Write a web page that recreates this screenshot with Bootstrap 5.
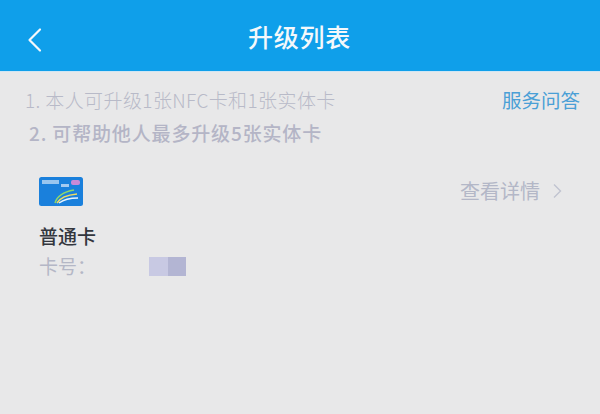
<!DOCTYPE html>
<html lang="zh">
<head>
<meta charset="utf-8">
<title>升级列表</title>
<link href="https://cdn.jsdelivr.net/npm/bootstrap@5.3.0/dist/css/bootstrap.min.css" rel="stylesheet">
<style>
html,body{height:100%}
body{width:600px;height:414px;overflow:hidden;background:#e8e8e9;font-family:"Noto Sans CJK SC","Liberation Sans",sans-serif}
.top-bar{height:71px;background:#0f9fea;color:#f4f8fb;box-shadow:0 1px 0 #cfe6f4}
.top-title{font-size:25px;font-weight:500;letter-spacing:.7px;line-height:1;margin-left:-1px;padding-top:2px}
.back-btn{left:27px;top:27px;width:16px;height:26px}
.notes{padding:17px 20px 0 25px}
.note-one{font-size:19px;font-weight:300;color:#b8bac8;line-height:24px;letter-spacing:.4px;white-space:nowrap}
.note-two{font-size:19px;font-weight:500;color:#b4b5c6;line-height:24px;margin-top:9px;margin-left:4px;letter-spacing:.85px;white-space:nowrap}
.help-link{font-size:19.5px;color:#4a9fd6;line-height:24px;font-weight:400}
.card-area{padding:0 38px 0 39px;margin-top:32px}
.card-logo{width:44px;height:29px;display:block}
.detail-link{font-size:20px;color:#b3b7c7;line-height:24px;padding-bottom:2px}
.card-name{font-size:19px;font-weight:500;color:#33363d;line-height:24px;margin-top:18px}
.card-no{font-size:19px;color:#b4b7c6;line-height:24px;margin-top:6px;height:24px}
.mask-a{width:19px;height:19px;background:#c8c9e3;margin-left:53px}
.mask-b{width:18px;height:19px;background:#b3b5d3}
</style>
</head>
<body>
<header class="top-bar position-relative d-flex align-items-center justify-content-center">
  <svg class="back-btn position-absolute" viewBox="0 0 16 26" fill="none" stroke="#f4f8fb" stroke-width="2.2" stroke-linecap="round" stroke-linejoin="round"><path d="M13 2.5 2.5 13 13 23.5"/></svg>
  <div class="top-title">升级列表</div>
</header>
<section class="notes d-flex justify-content-between align-items-start">
  <div>
    <div class="note-one">1. 本人可升级1张NFC卡和1张实体卡</div>
    <div class="note-two">2. 可帮助他人最多升级5张实体卡</div>
  </div>
  <a class="help-link text-decoration-none" href="#">服务问答</a>
</section>
<section class="card-area">
  <div class="d-flex justify-content-between align-items-center">
    <svg class="card-logo" viewBox="0 0 44 29">
      <rect width="44" height="29" rx="2.5" fill="#1a80dc"/>
      <rect x="3" y="3" width="17" height="4" fill="#cfe2f7" opacity=".7"/>
      <rect x="22" y="7" width="8" height="3" fill="#dfeafa" opacity=".7"/>
      <rect x="32" y="3" width="9" height="5" rx="2" fill="#c98ad8"/>
      <path d="M16 26C18 19 24 15 35 13" fill="none" stroke="#8fd86a" stroke-width="1.5"/>
      <path d="M18 26C21 21 27 18 38 17" fill="none" stroke="#f0dc60" stroke-width="1.5"/>
      <path d="M20 26C24 23 30 21 39 21" fill="none" stroke="#e8f4ff" stroke-width="1.5"/>
    </svg>
    <div class="detail-link d-flex align-items-center gap-2">
      <span>查看详情</span>
      <svg class="ms-1" width="10" height="16" viewBox="0 0 10 16" fill="none" stroke="#c0c3d0" stroke-width="1.4"><path d="M2 1.5 8.5 8 2 14.5"/></svg>
    </div>
  </div>
  <div class="card-name">普通卡</div>
  <div class="card-no d-flex align-items-center">
    <span>卡号：</span>
    <span class="mask-a"></span><span class="mask-b"></span>
  </div>
</section>
<script src="https://cdn.jsdelivr.net/npm/bootstrap@5.3.0/dist/js/bootstrap.bundle.min.js"></script>
</body>
</html>
